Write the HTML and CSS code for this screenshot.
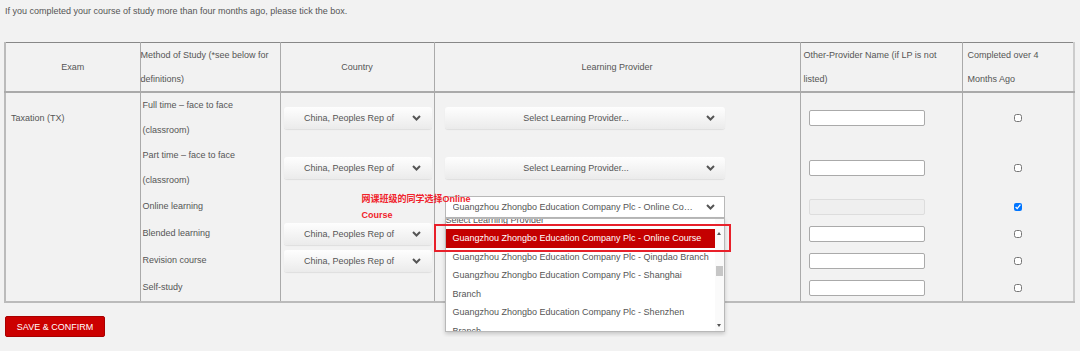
FILE: index.html
```html
<!DOCTYPE html>
<html lang="en">
<head>
  <meta charset="UTF-8">
  <title>Exam Details</title>
  <link rel="stylesheet" href="styles.css">
</head>
<body>
  <p class="note">If you completed your course of study more than four months ago, please tick the box.</p>

  <table class="exams">
    <colgroup>
      <col class="c-exam">
      <col class="c-method">
      <col class="c-country">
      <col class="c-lp">
      <col class="c-other">
      <col class="c-done">
    </colgroup>
    <thead>
      <tr>
        <th class="center">Exam</th>
        <th class="h-method">Method of Study (*see below for<br>definitions)</th>
        <th class="center">Country</th>
        <th class="center">Learning Provider</th>
        <th class="h-other">Other-Provider Name (if LP is not<br>listed)</th>
        <th class="h-done">Completed over 4<br>Months Ago</th>
      </tr>
    </thead>
    <tbody>
      <tr class="tall">
        <td class="exam">Taxation (TX)</td>
        <td class="method">Full time – face to face<br>(classroom)</td>
        <td class="country"><div class="dd dd-country"><span>China, Peoples Rep of</span><svg class="chev" width="9" height="6" viewBox="0 0 9 6"><path d="M1 1l3.5 3.5L8 1" fill="none" stroke="#555" stroke-width="2"/></svg></div></td>
        <td class="lp"><div class="dd dd-lp"><span>Select Learning Provider...</span><svg class="chev" width="9" height="6" viewBox="0 0 9 6"><path d="M1 1l3.5 3.5L8 1" fill="none" stroke="#555" stroke-width="2"/></svg></div></td>
        <td class="other"><input class="other-name" type="text"></td>
        <td class="done"><input type="checkbox"></td>
      </tr>
      <tr class="tall">
        <td></td>
        <td class="method">Part time – face to face<br>(classroom)</td>
        <td class="country"><div class="dd dd-country"><span>China, Peoples Rep of</span><svg class="chev" width="9" height="6" viewBox="0 0 9 6"><path d="M1 1l3.5 3.5L8 1" fill="none" stroke="#555" stroke-width="2"/></svg></div></td>
        <td class="lp"><div class="dd dd-lp"><span>Select Learning Provider...</span><svg class="chev" width="9" height="6" viewBox="0 0 9 6"><path d="M1 1l3.5 3.5L8 1" fill="none" stroke="#555" stroke-width="2"/></svg></div></td>
        <td class="other"><input class="other-name" type="text"></td>
        <td class="done"><input type="checkbox"></td>
      </tr>
      <tr class="short">
        <td></td>
        <td class="method">Online learning</td>
        <td class="country annotated">
          <div class="hint">网课班级的同学选择Online<br>Course</div>
        </td>
        <td class="lp">
          <div class="dd-open">
            <span class="dd-value">Guangzhou Zhongbo Education Company Plc - Online Course</span>
            <svg class="chev" width="9" height="6" viewBox="0 0 9 6"><path d="M1 1l3.5 3.5L8 1" fill="none" stroke="#555" stroke-width="2"/></svg>
            <div class="dd-list">
              <div class="dd-options">
                <div class="opt opt-first">Select Learning Provider</div>
                <div class="opt opt-sel">Guangzhou Zhongbo Education Company Plc - Online Course</div>
                <div class="opt">Guangzhou Zhongbo Education Company Plc - Qingdao Branch</div>
                <div class="opt">Guangzhou Zhongbo Education Company Plc - Shanghai<br>Branch</div>
                <div class="opt">Guangzhou Zhongbo Education Company Plc - Shenzhen<br>Branch</div>
              </div>
              <div class="scrollbar">
                <span class="arrow-up"></span>
                <span class="thumb"></span>
                <span class="arrow-down"></span>
              </div>
            </div>
            <div class="mark"></div>
          </div>
        </td>
        <td class="other"><input class="other-name" type="text" disabled></td>
        <td class="done"><input type="checkbox" checked></td>
      </tr>
      <tr class="short">
        <td></td>
        <td class="method">Blended learning</td>
        <td class="country"><div class="dd dd-country"><span>China, Peoples Rep of</span><svg class="chev" width="9" height="6" viewBox="0 0 9 6"><path d="M1 1l3.5 3.5L8 1" fill="none" stroke="#555" stroke-width="2"/></svg></div></td>
        <td class="lp"></td>
        <td class="other"><input class="other-name" type="text"></td>
        <td class="done"><input type="checkbox"></td>
      </tr>
      <tr class="short">
        <td></td>
        <td class="method">Revision course</td>
        <td class="country"><div class="dd dd-country"><span>China, Peoples Rep of</span><svg class="chev" width="9" height="6" viewBox="0 0 9 6"><path d="M1 1l3.5 3.5L8 1" fill="none" stroke="#555" stroke-width="2"/></svg></div></td>
        <td class="lp"></td>
        <td class="other"><input class="other-name" type="text"></td>
        <td class="done"><input type="checkbox"></td>
      </tr>
      <tr class="short">
        <td></td>
        <td class="method">Self-study</td>
        <td class="country"></td>
        <td class="lp"></td>
        <td class="other"><input class="other-name" type="text"></td>
        <td class="done"><input type="checkbox"></td>
      </tr>
    </tbody>
  </table>

  <button class="save" type="button">SAVE &amp; CONFIRM</button>
</body>
</html>
```

FILE: styles.css
```css
body {
  margin: 0;
  padding: 0 4px;
  background: #f2f2f2;
  font-family: "Liberation Sans", Arial, sans-serif;
  font-size: 9px;
  color: #555;
}
.note {
  margin: 0;
  padding: 4px 0 0 1px;
  line-height: 14px;
}
.exams {
  margin-top: 24px;
  width: 1069px;
  table-layout: fixed;
  border-collapse: collapse;
  border-top: 1px solid #888;
  border-left: 2px solid #bbb;
  border-right: 2px solid #ccc;
  border-bottom: 2px solid #bbb;
}
.c-exam { width: 135px; }
.c-method { width: 140px; }
.c-country { width: 154px; }
.c-lp { width: 366px; }
.c-other { width: 162px; }
.c-done { width: 112px; }
.exams th,
.exams td {
  border-left: 1px solid #aaa;
  border-right: 1px solid #aaa;
  padding: 0;
  font-weight: normal;
  line-height: 25px;
  text-align: left;
  vertical-align: middle;
}
.exams thead th {
  height: 48px;
  line-height: 24px;
  border-bottom: 2px solid #aaa;
}
.exams th.center { text-align: center; }
.exams .h-other { padding-left: 3px; }
.exams .h-done { padding-left: 5px; }
.tall td { height: 50px; }
.short td { height: 27px; }
.exams .exam { padding-left: 5px; }
.exams .method { padding-left: 2px; }
.exams .country { padding-left: 3px; }
.exams .lp { padding-left: 10px; }
.exams .other { padding-left: 8px; }
.exams .done { text-align: center; }

.dd {
  position: relative;
  display: flex;
  align-items: center;
  justify-content: center;
  height: 22px;
  padding-right: 17px;
  box-sizing: border-box;
  border-radius: 3px;
  background: linear-gradient(#fefefe, #ebebeb);
  box-shadow: 0 1px 1px rgba(0, 0, 0, 0.08);
  line-height: 22px;
}
.dd-country { width: 148px; }
.dd-lp { width: 280px; }
.chev {
  position: absolute;
  right: 11px;
  top: 8px;
}
.dd-lp .chev { right: 10px; }

.annotated { position: relative; }
.hint {
  position: absolute;
  left: 81px;
  top: -2px;
  z-index: 5;
  color: #f0222b;
  font-family: "Liberation Sans", "Noto Sans CJK SC", sans-serif;
  font-weight: bold;
  line-height: 16px;
  white-space: nowrap;
}

.dd-open {
  position: relative;
  width: 280px;
  height: 22px;
  box-sizing: border-box;
  border: 1px solid #b8b8b8;
  background: #fff;
  padding: 0 27px 0 7px;
  line-height: 20px;
}
.dd-value {
  display: block;
  overflow: hidden;
  white-space: nowrap;
  text-overflow: ellipsis;
}
.dd-open .chev { right: 9px; top: 7px; }
.dd-list {
  position: absolute;
  left: -1px;
  top: 21px;
  width: 280px;
  height: 114px;
  box-sizing: border-box;
  border: 1px solid #b8b8b8;
  background: #fff;
  box-shadow: 0 2px 4px rgba(0, 0, 0, 0.18);
  display: flex;
  overflow: hidden;
  z-index: 2;
}
.dd-options {
  flex: 1;
  overflow: hidden;
}
.opt {
  padding-left: 7px;
  line-height: 18.6px;
  white-space: nowrap;
}
.opt-first {
  padding-left: 0;
  margin-top: -8px;
}
.opt-sel {
  background: #c40000;
  color: #fff;
}
.scrollbar {
  position: relative;
  width: 9px;
  background: #fafafa;
}
.arrow-up,
.arrow-down {
  position: absolute;
  left: 2px;
  width: 0;
  height: 0;
  border-left: 2px solid transparent;
  border-right: 2px solid transparent;
}
.arrow-up {
  top: 13px;
  border-bottom: 3px solid #555;
}
.arrow-down {
  bottom: 4px;
  border-top: 3px solid #555;
}
.thumb {
  position: absolute;
  left: 1px;
  top: 47px;
  width: 7px;
  height: 10px;
  background: #c6c6c6;
}
.mark {
  position: absolute;
  left: -12px;
  top: 27px;
  width: 297px;
  height: 28px;
  box-sizing: border-box;
  border: 2px solid #e8202a;
  z-index: 3;
}

.other-name {
  display: block;
  width: 116px;
  height: 16px;
  box-sizing: border-box;
  margin: 0;
  border: 1px solid #aaa;
  border-radius: 2px;
  background: #fff;
}
.other-name:disabled {
  background: #efefef;
  border-color: #ddd;
}
.done input {
  width: 8px;
  height: 8px;
  margin: 0;
  vertical-align: middle;
}

.save {
  display: block;
  margin: 13px 0 0 1px;
  width: 100px;
  height: 21px;
  padding: 0;
  border: 1px solid #a80000;
  border-radius: 2px;
  background: #cc0000;
  color: #fff;
  font-family: "Liberation Sans", Arial, sans-serif;
  font-size: 9px;
  cursor: pointer;
}
```
